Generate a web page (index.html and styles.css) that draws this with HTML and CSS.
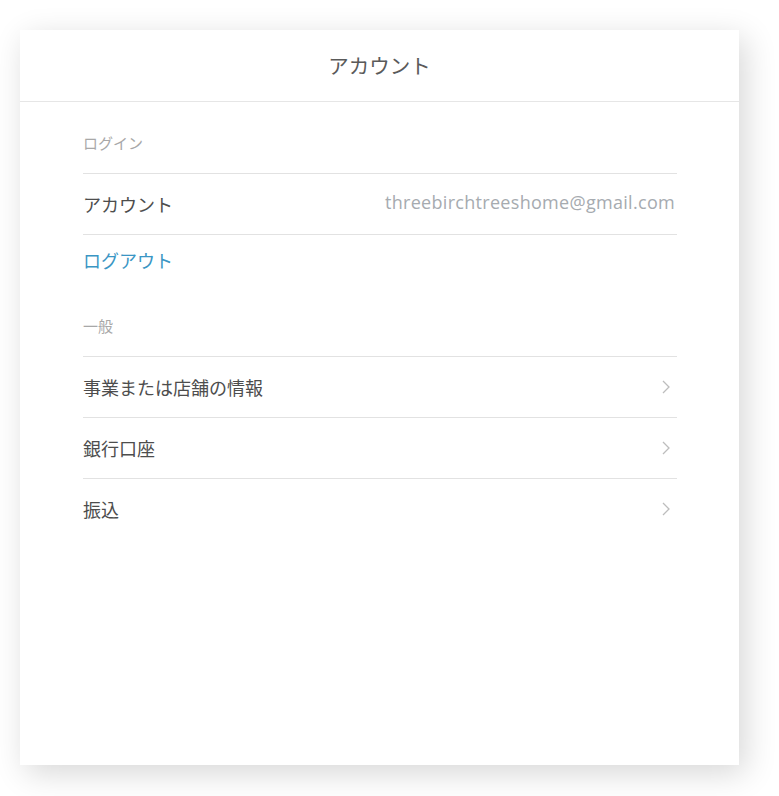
FILE: index.html
```html
<!DOCTYPE html>
<html lang="ja">
<head>
<meta charset="utf-8">
<title>アカウント</title>
<link rel="stylesheet" href="styles.css">
</head>
<body>
<div class="page">
  <div class="card">
    <header class="card-header">アカウント</header>
    <div class="content">
      <div class="section-label first">ログイン</div>
      <div class="row bordered">
        <span class="row-title">アカウント</span>
        <span class="row-value">threebirchtreeshome@gmail.com</span>
      </div>
      <div class="row link-row bordered">
        <span class="row-link">ログアウト</span>
      </div>
      <div class="section-label">一般</div>
      <div class="row bordered">
        <span class="row-title">事業または店舗の情報</span>
        <svg class="chev" width="8" height="14" viewBox="0 0 8 14"><path d="M1 1l6 6-6 6" fill="none" stroke="#bdbdbd" stroke-width="1.3"/></svg>
      </div>
      <div class="row bordered">
        <span class="row-title">銀行口座</span>
        <svg class="chev" width="8" height="14" viewBox="0 0 8 14"><path d="M1 1l6 6-6 6" fill="none" stroke="#bdbdbd" stroke-width="1.3"/></svg>
      </div>
      <div class="row bordered">
        <span class="row-title">振込</span>
        <svg class="chev" width="8" height="14" viewBox="0 0 8 14"><path d="M1 1l6 6-6 6" fill="none" stroke="#bdbdbd" stroke-width="1.3"/></svg>
      </div>
    </div>
  </div>
</div>
</body>
</html>
```

FILE: styles.css
```css
* { box-sizing: border-box; }
html, body { margin: 0; padding: 0; background: #ffffff; }
body {
  font-family: "Noto Sans CJK JP", "Noto Sans", sans-serif;
  color: #4a4a4a;
}
.page {
  padding: 30px 40px 31px 20px;
}
.card {
  width: 719px;
  height: 735px;
  background: #ffffff;
  box-shadow: 6px 8px 30px rgba(0, 0, 0, 0.16);
}
.card-header {
  height: 72px;
  border-bottom: 1px solid #e6e6e6;
  display: flex;
  align-items: center;
  justify-content: center;
  font-size: 20.5px;
  color: #5a5a5a;
  padding-bottom: 1px;
}
.content {
  padding: 0 62px 0 63px;
}
.section-label {
  font-size: 15px;
  line-height: 20px;
  color: #a8a8a8;
  padding-top: 32px;
  padding-bottom: 20px;
}
.section-label.first {
  padding-top: 31px;
}
.row {
  display: flex;
  align-items: center;
  justify-content: space-between;
  height: 61px;
  padding-bottom: 1px;
}
.row.bordered {
  border-top: 1px solid #e2e2e2;
}
.row.link-row {
  height: 50px;
  padding-bottom: 0;
  align-items: flex-start;
  padding-top: 15px;
}
.row-title {
  font-size: 18px;
  line-height: 20px;
  color: #4d4d4d;
}
.row-value {
  font-family: "Open Sans", "Lato", sans-serif;
  font-size: 18px;
  letter-spacing: 0.3px;
  color: #a6abb0;
  padding-right: 2px;
  padding-bottom: 3px;
}
.row-link {
  font-size: 18px;
  line-height: 20px;
  color: #3a96c4;
}
.chev {
  margin-right: 7px;
}
```
